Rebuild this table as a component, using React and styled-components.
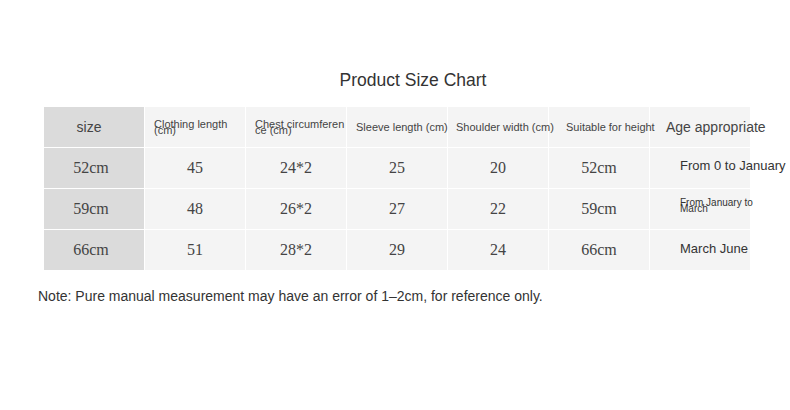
import React from "react"
import styled, { createGlobalStyle } from "styled-components"

const GlobalStyle = createGlobalStyle`
  body {
    margin: 0;
    background: #fff;
    font-family: "Liberation Sans", Arial, sans-serif;
  }
`

const Page = styled.div`
  width: 790px;
  height: 410px;
  padding-top: 70px;
  box-sizing: border-box;
`

// title
const Title = styled.h1`
  margin: 0 0 17px;
  padding-left: 36px;
  text-align: center;
  font-size: 17.5px;
  font-weight: normal;
  line-height: 20px;
  color: #333;
`

// table grid
const Table = styled.div`
  margin-left: 44px;
  width: 706px;
  display: grid;
  grid-template-columns: repeat(7, 100px);
  grid-auto-rows: 40px;
  gap: 1px;
`

const Cell = styled.div`
  background: ${(p) => (p.$first ? "#dbdbdb" : "#f4f4f4")};
  display: flex;
  align-items: center;
  justify-content: ${(p) => (p.$left ? "flex-start" : "center")};
  padding-left: ${(p) => p.$pad || 0}px;
  padding-right: ${(p) => (p.$first ? 10 : 0)}px;
  box-sizing: border-box;
  overflow: visible;
  white-space: nowrap;
`

// overflowing labels sit above the neighbouring cell
const HeadText = styled.span`
  position: relative;
  z-index: 1;
  font-size: ${(p) => p.$size || 11}px;
  line-height: ${(p) => (p.$tight ? "6px" : "normal")};
  color: #444;
  padding-top: ${(p) => (p.$tight ? 2 : 0)}px;
  margin-top: ${(p) => p.$up || 0}px;
`

const Value = styled.span`
  font-family: "Liberation Serif", "Times New Roman", serif;
  font-size: 16px;
  color: #444;
  margin-left: ${(p) => p.$shift || 0}px;
`

const Age = styled.span`
  position: relative;
  z-index: 1;
  font-size: ${(p) => p.$size || 13}px;
  line-height: ${(p) => (p.$tight ? "6px" : "normal")};
  color: #333;
  margin-top: ${(p) => p.$up || 0}px;
`

// footnote
const Note = styled.p`
  margin: 18px 0 0 38px;
  font-size: 14px;
  color: #333;
`

const rows = [
  { size: "52cm", len: "45", chest: "24*2", sleeve: "25", shoulder: "20", height: "52cm" },
  { size: "59cm", len: "48", chest: "26*2", sleeve: "27", shoulder: "22", height: "59cm" },
  { size: "66cm", len: "51", chest: "28*2", sleeve: "29", shoulder: "24", height: "66cm" },
]

const ages = [
  <Age key="a" $up={-6}>From 0 to January</Age>,
  <Age key="b" $size={10} $tight $up={-6}>From January to<br />March</Age>,
  <Age key="c" $up={-4}>March June</Age>,
]

const App = () => {
  return (
    <Page>
      <GlobalStyle />
      <Title>Product Size Chart</Title>
      <Table>
        <Cell $first><HeadText $size={14}>size</HeadText></Cell>
        <Cell $left $pad={9}>
          <HeadText $tight $up={-2}>Clothing length<br />(cm)</HeadText>
        </Cell>
        <Cell $left $pad={9}>
          <HeadText $tight $up={-2}>Chest circumferen<br />ce (cm)</HeadText>
        </Cell>
        <Cell $left $pad={9}><HeadText>Sleeve length (cm)</HeadText></Cell>
        <Cell $left $pad={8}><HeadText>Shoulder width (cm)</HeadText></Cell>
        <Cell $left $pad={17}><HeadText>Suitable for height</HeadText></Cell>
        <Cell $left $pad={16}><HeadText $size={14}>Age appropriate</HeadText></Cell>

        {rows.map((r, i) => (
          <React.Fragment key={r.size}>
            <Cell $first><Value $shift={4}>{r.size}</Value></Cell>
            <Cell><Value>{r.len}</Value></Cell>
            <Cell><Value>{r.chest}</Value></Cell>
            <Cell><Value>{r.sleeve}</Value></Cell>
            <Cell><Value>{r.shoulder}</Value></Cell>
            <Cell><Value>{r.height}</Value></Cell>
            <Cell $left $pad={30}>{ages[i]}</Cell>
          </React.Fragment>
        ))}
      </Table>
      <Note>Note: Pure manual measurement may have an error of 1–2cm, for reference only.</Note>
    </Page>
  )
}

export default App
